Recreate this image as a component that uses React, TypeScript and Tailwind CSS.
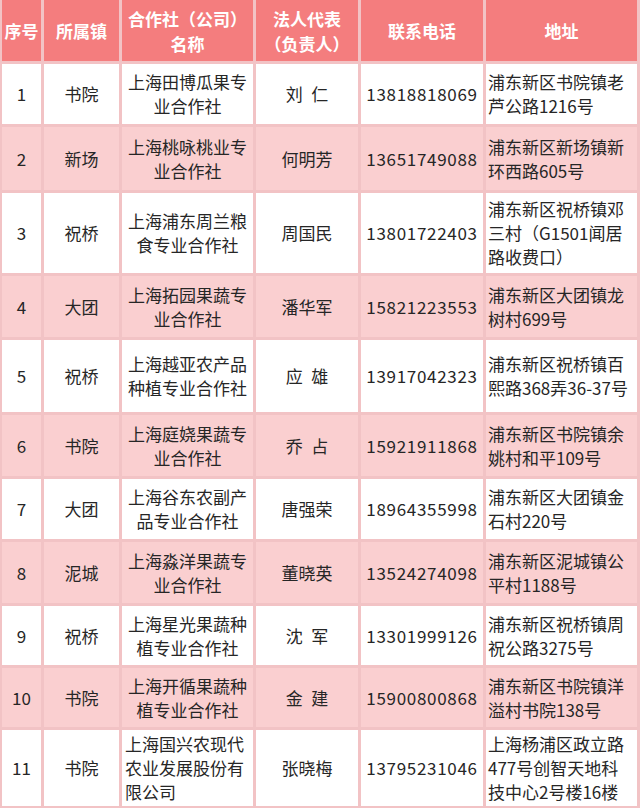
import React from "react"

type Row = {
  no: string
  zhen: string
  name: string[]
  nameLeft?: boolean
  person: string
  phone: string
  addr: string[]
  h: string
}

const rows: Row[] = [
  { no: "1", zhen: "书院", name: ["上海田博瓜果专", "业合作社"], person: "刘\u2002仁", phone: "13818818069", addr: ["浦东新区书院镇老", "芦公路1216号"], h: "h-[60px]" },
  { no: "2", zhen: "新场", name: ["上海桃咏桃业专", "业合作社"], person: "何明芳", phone: "13651749088", addr: ["浦东新区新场镇新", "环西路605号"], h: "h-[63px]" },
  { no: "3", zhen: "祝桥", name: ["上海浦东周兰粮", "食专业合作社"], person: "周国民", phone: "13801722403", addr: ["浦东新区祝桥镇邓", "三村（G1501闻居", "路收费口）"], h: "h-[80px]" },
  { no: "4", zhen: "大团", name: ["上海拓园果蔬专", "业合作社"], person: "潘华军", phone: "15821223553", addr: ["浦东新区大团镇龙", "树村699号"], h: "h-[61px]" },
  { no: "5", zhen: "祝桥", name: ["上海越亚农产品", "种植专业合作社"], person: "应\u2002雄", phone: "13917042323", addr: ["浦东新区祝桥镇百", "熙路368弄36-37号"], h: "h-[72px]" },
  { no: "6", zhen: "书院", name: ["上海庭娆果蔬专", "业合作社"], person: "乔\u2002占", phone: "15921911868", addr: ["浦东新区书院镇余", "姚村和平109号"], h: "h-[61px]" },
  { no: "7", zhen: "大团", name: ["上海谷东农副产", "品专业合作社"], person: "唐强荣", phone: "18964355998", addr: ["浦东新区大团镇金", "石村220号"], h: "h-[60px]" },
  { no: "8", zhen: "泥城", name: ["上海淼洋果蔬专", "业合作社"], person: "董晓英", phone: "13524274098", addr: ["浦东新区泥城镇公", "平村1188号"], h: "h-[61px]" },
  { no: "9", zhen: "祝桥", name: ["上海星光果蔬种", "植专业合作社"], person: "沈\u2002军", phone: "13301999126", addr: ["浦东新区祝桥镇周", "祝公路3275号"], h: "h-[59px]" },
  { no: "10", zhen: "书院", name: ["上海开循果蔬种", "植专业合作社"], person: "金\u2002建", phone: "15900800868", addr: ["浦东新区书院镇洋", "溢村书院138号"], h: "h-[59px]" },
  { no: "11", zhen: "书院", name: ["上海国兴农现代", "农业发展股份有", "限公司"], nameLeft: true, person: "张晓梅", phone: "13795231046", addr: ["上海杨浦区政立路", "477号创智天地科", "技中心2号楼16楼"], h: "h-[76px]" },
]

const cols = "grid grid-cols-[39px_75px_131px_102px_122px_151px] gap-[3px]"

function Lines({ lines }: { lines: string[] }) {
  return (
    <>
      {lines.map((l, i) => (
        <div key={i} className="whitespace-nowrap">
          {l}
        </div>
      ))}
    </>
  )
}

export default function App() {
  return (
    <div className="w-[640px] h-[808px] overflow-hidden bg-[#f2c3c5] pl-[2px] pr-[3px] pb-[2px] font-['Noto_Sans_CJK_SC',sans-serif] text-[17px] leading-[24px] text-[#262626]">
      <div className="flex flex-col gap-[3px]">
        <div className={`${cols} h-[61px] font-bold leading-[25px] text-white`}>
          <div className="flex items-center justify-center bg-[#f47d7e]">序号</div>
          <div className="flex items-center justify-center bg-[#f47d7e]">所属镇</div>
          <div className="flex flex-col items-center justify-center bg-[#f47d7e]">
            <div>合作社（公司）</div>
            <div>名称</div>
          </div>
          <div className="flex flex-col items-center justify-center bg-[#f47d7e]">
            <div>法人代表</div>
            <div>（负责人）</div>
          </div>
          <div className="flex items-center justify-center bg-[#f47d7e]">联系电话</div>
          <div className="flex items-center justify-center bg-[#f47d7e]">地址</div>
        </div>

        {rows.map((r, i) => {
          const bg = i % 2 === 1 ? "bg-[#facfd0]" : "bg-white"
          return (
            <div key={r.no} className={`${cols} ${r.h}`}>
              <div className={`flex items-center justify-center ${bg}`}>{r.no}</div>
              <div className={`flex items-center justify-center ${bg}`}>{r.zhen}</div>
              <div
                className={`flex flex-col justify-center px-[3px] ${
                  r.nameLeft ? "items-start" : "items-center"
                } ${bg}`}
              >
                <Lines lines={r.name} />
              </div>
              <div className={`flex items-center justify-center whitespace-pre ${bg}`}>{r.person}</div>
              <div className={`flex items-center justify-center tracking-[0.7px] ${bg}`}>{r.phone}</div>
              <div className={`flex flex-col justify-center items-start px-[2px] ${bg}`}>
                <Lines lines={r.addr} />
              </div>
            </div>
          )
        })}
      </div>
    </div>
  )
}
